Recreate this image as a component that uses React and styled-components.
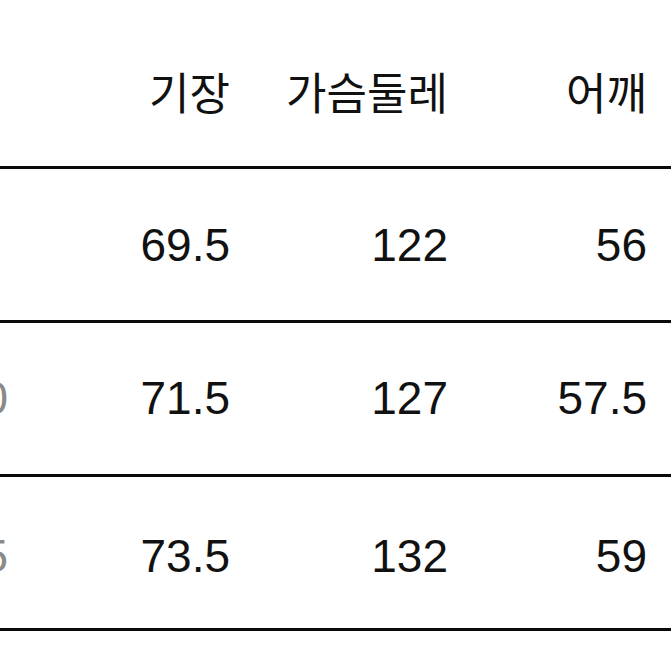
import React from "react";
import styled, { createGlobalStyle } from "styled-components";

const Global = createGlobalStyle`
  html, body { margin: 0; padding: 0; background: #ffffff; }
  body { width: 671px; height: 671px; overflow: hidden; }
`;

const Table = styled.div`
  width: 671px;
  display: grid;
  grid-template-columns: 8px 222px 218px 199px 1fr;
`;

const HeaderRow = styled.div`
  display: contents;
`;

const HeadCell = styled.div`
  height: 169px;
  box-sizing: border-box;
  border-bottom: 3px solid #0a0a0a;
  padding-top: 69px;
  display: flex;
  justify-content: flex-end;
  font-family: "Noto Sans CJK KR", "Noto Sans", sans-serif;
  font-size: 44px;
  line-height: 1;
  color: #111;
  white-space: nowrap;
`;

const Row = styled.div`
  display: contents;
`;

const Cell = styled.div`
  height: 154px;
  box-sizing: border-box;
  border-bottom: 3px solid #0a0a0a;
  padding-top: ${(p) => p.$top}px;
  display: flex;
  justify-content: flex-end;
  font-family: "Liberation Sans", Arial, sans-serif;
  font-size: 46px;
  line-height: 1;
  color: ${(p) => (p.$muted ? "#8a8a8a" : "#111")};
  white-space: nowrap;
`;

const headers = ["", "기장", "가슴둘레", "어깨", ""];
const rows = [
  { label: "", top: 53, values: ["69.5", "122", "56"] },
  { label: "100", top: 52, values: ["71.5", "127", "57.5"] },
  { label: "105", top: 56, values: ["73.5", "132", "59"] },
];

export default function App() {
  return (
    <>
      <Global />
      <Table>
        <HeaderRow>
          {headers.map((h, i) => (
            <HeadCell key={i}>{h}</HeadCell>
          ))}
        </HeaderRow>
        {rows.map((r, i) => (
          <Row key={i}>
            <Cell $top={r.top} $muted>
              {r.label}
            </Cell>
            {r.values.map((v, j) => (
              <Cell key={j} $top={r.top}>
                {v}
              </Cell>
            ))}
            <Cell $top={r.top} />
          </Row>
        ))}
      </Table>
    </>
  );
}
